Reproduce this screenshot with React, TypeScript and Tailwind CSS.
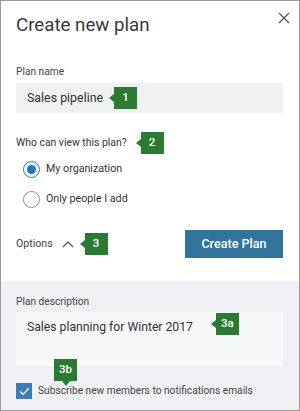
import React from "react";

const Badge = ({ label, point = "left" }: { label: string; point?: "left" | "down" }) => {
  return (
    <div className="relative flex h-[22px] w-[23px] items-center justify-center bg-[#2b7a31] text-[11.5px] font-medium text-white">
      {label}
      {point === "left" ? (
        <span className="absolute left-[-5px] top-[7px] h-0 w-0 border-y-[4px] border-r-[5px] border-y-transparent border-r-[#2b7a31]" />
      ) : (
        <span className="absolute bottom-[-5px] left-[8px] h-0 w-0 border-x-[4px] border-t-[5px] border-x-transparent border-t-[#2b7a31]" />
      )}
    </div>
  );
};

const Radio = ({ checked, label }: { checked?: boolean; label: string }) => (
  <div className="flex h-[17px] items-center gap-[6px]">
    <div
      className={`flex h-[17px] w-[17px] items-center justify-center rounded-full border ${
        checked ? "border-[#1f77c9]" : "border-[#8a8a8a]"
      } bg-white`}
    >
      {checked && <div className="h-[9px] w-[9px] rounded-full bg-[#1f77c9]" />}
    </div>
    <span className="text-[10.7px] text-[#333]">{label}</span>
  </div>
);

export default function App() {
  return (
    <div className="flex h-[411px] w-[300px] flex-col border border-[#9b9b9b] bg-white font-['Roboto',sans-serif] text-[#333]">
      {/* top part */}
      <div className="pl-[15px] pr-[16px] pt-[11px]">
        <div className="flex items-start justify-between">
          <h1 className="text-[18.7px] leading-[26px] text-[#323a40]">Create new plan</h1>
          <svg width="12" height="12" viewBox="0 0 12 12" className="mr-[-7px]">
            <path d="M1 1 L11 11 M11 1 L1 11" stroke="#555" strokeWidth="1.2" />
          </svg>
        </div>

        <div className="mt-[27px] text-[10.2px] leading-[14px] text-[#444]">Plan name</div>
        <div className="mt-[4px] flex h-[30px] items-center bg-[#eef0f2] pl-[11px]">
          <span className="text-[12.4px] text-[#333]">Sales pipeline</span>
          <div className="ml-[11px]">
            <Badge label="1" />
          </div>
        </div>

        <div className="mt-[19px] flex h-[22px] items-center">
          <span className="text-[10.4px] text-[#333]">Who can view this plan?</span>
          <div className="ml-[14px]">
            <Badge label="2" />
          </div>
        </div>

        <div className="mt-[7px] flex flex-col gap-[13px] pl-[7px]">
          <Radio checked label="My organization" />
          <Radio label="Only people I add" />
        </div>

        <div className="mt-[22px] flex items-center justify-between">
          <div className="flex items-center">
            <span className="text-[10.6px] text-[#444]">Options</span>
            <svg width="12" height="8" viewBox="0 0 12 8" className="ml-[9px]">
              <path d="M1 7 L6 2 L11 7" stroke="#555" strokeWidth="1.3" fill="none" />
            </svg>
            <div className="ml-[11px]">
              <Badge label="3" />
            </div>
          </div>
          <button className="h-[28px] w-[98px] bg-[#31739b] text-[12.6px] font-medium text-white">
            Create Plan
          </button>
        </div>
      </div>

      {/* options part */}
      <div className="mt-[23px] flex-1 bg-[#eef0f3] pl-[15px] pr-[16px] pt-[14px]">
        <div className="text-[10.2px] leading-[14px] text-[#444]">Plan description</div>
        <div className="mt-[3px] flex h-[54px] items-start bg-[#f6f7f9] pl-[11px]">
          <span className="mt-[6px] text-[12.2px] leading-[18px] text-[#333]">
            Sales planning for Winter 2017
          </span>
          <div className="ml-[23px] mt-[1px]">
            <Badge label="3a" />
          </div>
        </div>

        <div className="relative mt-[17px] flex h-[16px] items-center gap-[6px]">
          <div className="absolute left-[38px] top-[-24px]">
            <Badge label="3b" point="down" />
          </div>
          <div className="flex h-[16px] w-[16px] shrink-0 items-center justify-center border border-[#3d7db5] bg-[#3d7db5]">
            <svg width="11" height="9" viewBox="0 0 11 9">
              <path d="M1 4.5 L4 7.5 L10 1" stroke="white" strokeWidth="1.2" fill="none" />
            </svg>
          </div>
          <span className="whitespace-nowrap text-[10.2px] text-[#444]">
            Subscribe new members to notifications emails
          </span>
        </div>
      </div>
    </div>
  );
}
